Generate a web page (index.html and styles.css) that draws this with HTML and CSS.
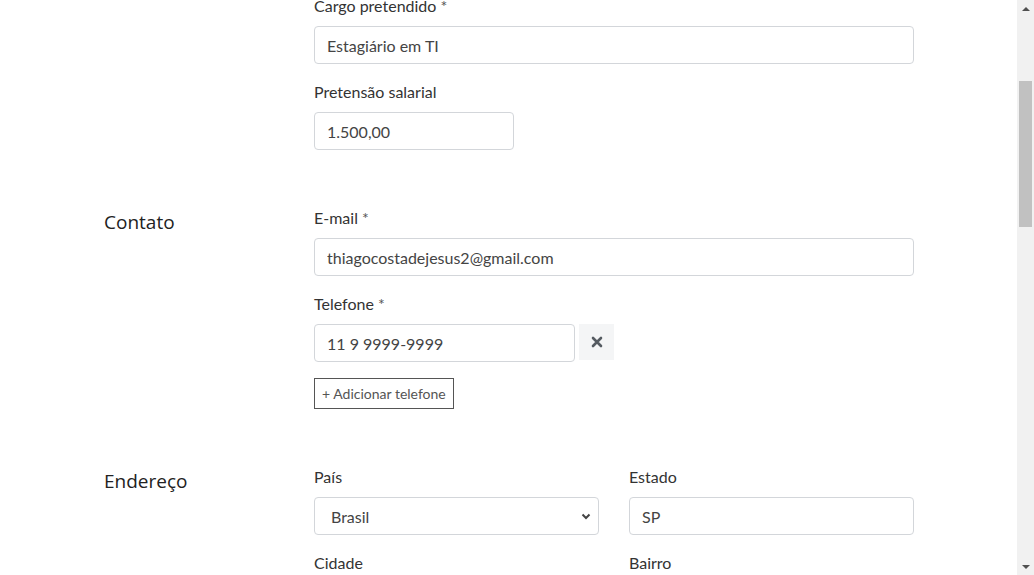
FILE: index.html
```html
<!DOCTYPE html>
<html lang="pt-BR">
<head>
<meta charset="utf-8">
<title>Formulário</title>
<link rel="stylesheet" href="styles.css">
</head>
<body>
<div class="viewport">
  <main class="page">
    <div class="form">
      <section class="section">
        <div class="section-title"></div>
        <div class="fields">
          <div class="field">
            <label class="label">Cargo pretendido <span class="req">*</span></label>
            <input class="input" type="text" value="Estagiário em TI">
          </div>
          <div class="field">
            <label class="label">Pretensão salarial</label>
            <input class="input input-short" type="text" value="1.500,00">
          </div>
        </div>
      </section>

      <section class="section">
        <h2 class="section-title">Contato</h2>
        <div class="fields">
          <div class="field">
            <label class="label">E-mail <span class="req">*</span></label>
            <input class="input" type="text" value="thiagocostadejesus2@gmail.com">
          </div>
          <div class="field field-tight">
            <label class="label">Telefone <span class="req">*</span></label>
            <div class="phone-row">
              <input class="input input-phone" type="text" value="11 9 9999-9999">
              <button class="remove-btn" type="button" aria-label="Remover">
                <svg width="12" height="12" viewBox="0 0 12 12"><path d="M2 2 L10 10 M10 2 L2 10" stroke="#555b61" stroke-width="2.6" stroke-linecap="round"/></svg>
              </button>
            </div>
          </div>
          <button class="add-btn" type="button">+ Adicionar telefone</button>
        </div>
      </section>

      <section class="section">
        <h2 class="section-title">Endereço</h2>
        <div class="fields grid2">
          <div class="field">
            <label class="label">País</label>
            <div class="select-wrap">
              <select class="input select">
                <option>Brasil</option>
              </select>
              <svg class="chev" width="10" height="7" viewBox="0 0 10 7"><path d="M1.5 1.5 L5 5 L8.5 1.5" fill="none" stroke="#444" stroke-width="2"/></svg>
            </div>
          </div>
          <div class="field">
            <label class="label">Estado</label>
            <input class="input" type="text" value="SP">
          </div>
          <div class="field">
            <label class="label">Cidade</label>
            <input class="input" type="text" value="">
          </div>
          <div class="field">
            <label class="label">Bairro</label>
            <input class="input" type="text" value="">
          </div>
        </div>
      </section>
    </div>
  </main>
  <div class="scrollbar">
    <div class="sb-arrow sb-up"></div>
    <div class="sb-track"><div class="sb-thumb"></div></div>
    <div class="sb-arrow sb-down"></div>
  </div>
</div>
</body>
</html>
```

FILE: styles.css
```css
* { box-sizing: border-box; }
html, body { margin: 0; padding: 0; }
body {
  background: #fff;
  font-family: Lato, "Open Sans", sans-serif;
  color: #333;
}
.viewport {
  display: flex;
  width: 1034px;
  height: 575px;
  overflow: hidden;
}
.page {
  flex: 1;
  overflow: hidden;
  background: #fff;
}
.form {
  margin-top: -4px;
  padding-left: 104px;
  display: flex;
  flex-direction: column;
  gap: 40px;
}
.section {
  display: grid;
  grid-template-columns: 210px 600px;
}
.section-title {
  margin: 0;
  font-family: "Open Sans", "Noto Sans", sans-serif;
  font-weight: 400;
  font-size: 19px;
  line-height: 28px;
  color: #222;
}
.fields {
  display: flex;
  flex-direction: column;
}
.grid2 {
  display: grid;
  grid-template-columns: 285px 285px;
  column-gap: 30px;
}
.field {
  display: flex;
  flex-direction: column;
  margin-bottom: 18px;
}
.field-tight { margin-bottom: 16px; }
.label {
  font-size: 16px;
  line-height: 20px;
  margin-bottom: 10px;
  color: #333;
}
.req { color: #555; }
.input {
  height: 38px;
  width: 100%;
  border: 1px solid #d3d6da;
  border-radius: 4px;
  padding: 0 12px;
  font-family: Lato, sans-serif;
  font-size: 16px;
  color: #444;
  background: #fff;
  outline: none;
}
.input-short { width: 200px; }
.phone-row {
  display: flex;
  gap: 4px;
  align-items: flex-start;
}
.input-phone { width: 261px; }
.remove-btn {
  width: 35px;
  height: 36px;
  border: none;
  background: #f4f5f6;
  display: flex;
  align-items: center;
  justify-content: center;
  padding: 0;
}
.add-btn {
  align-self: flex-start;
  height: 31px;
  padding: 0 7px;
  border: 1px solid #555;
  background: #fff;
  font-family: Lato, sans-serif;
  font-size: 14px;
  color: #555;
  margin-bottom: 18px;
}
.select-wrap {
  position: relative;
}
.select {
  appearance: none;
  -webkit-appearance: none;
  padding-left: 16px;
}
.chev {
  position: absolute;
  right: 8px;
  top: 16px;
}
.scrollbar {
  width: 17px;
  background: #f1f1f1;
  display: flex;
  flex-direction: column;
}
.sb-arrow {
  height: 17px;
  display: flex;
  align-items: center;
  justify-content: center;
}
.sb-up::before {
  content: "";
  border-left: 4px solid transparent;
  border-right: 4px solid transparent;
  border-bottom: 4px solid #505050;
}
.sb-down::before {
  content: "";
  border-left: 4px solid transparent;
  border-right: 4px solid transparent;
  border-top: 4px solid #505050;
}
.sb-track {
  flex: 1;
  padding: 64px 2px 0 2px;
}
.sb-thumb {
  height: 146px;
  background: #c1c1c1;
}
```
